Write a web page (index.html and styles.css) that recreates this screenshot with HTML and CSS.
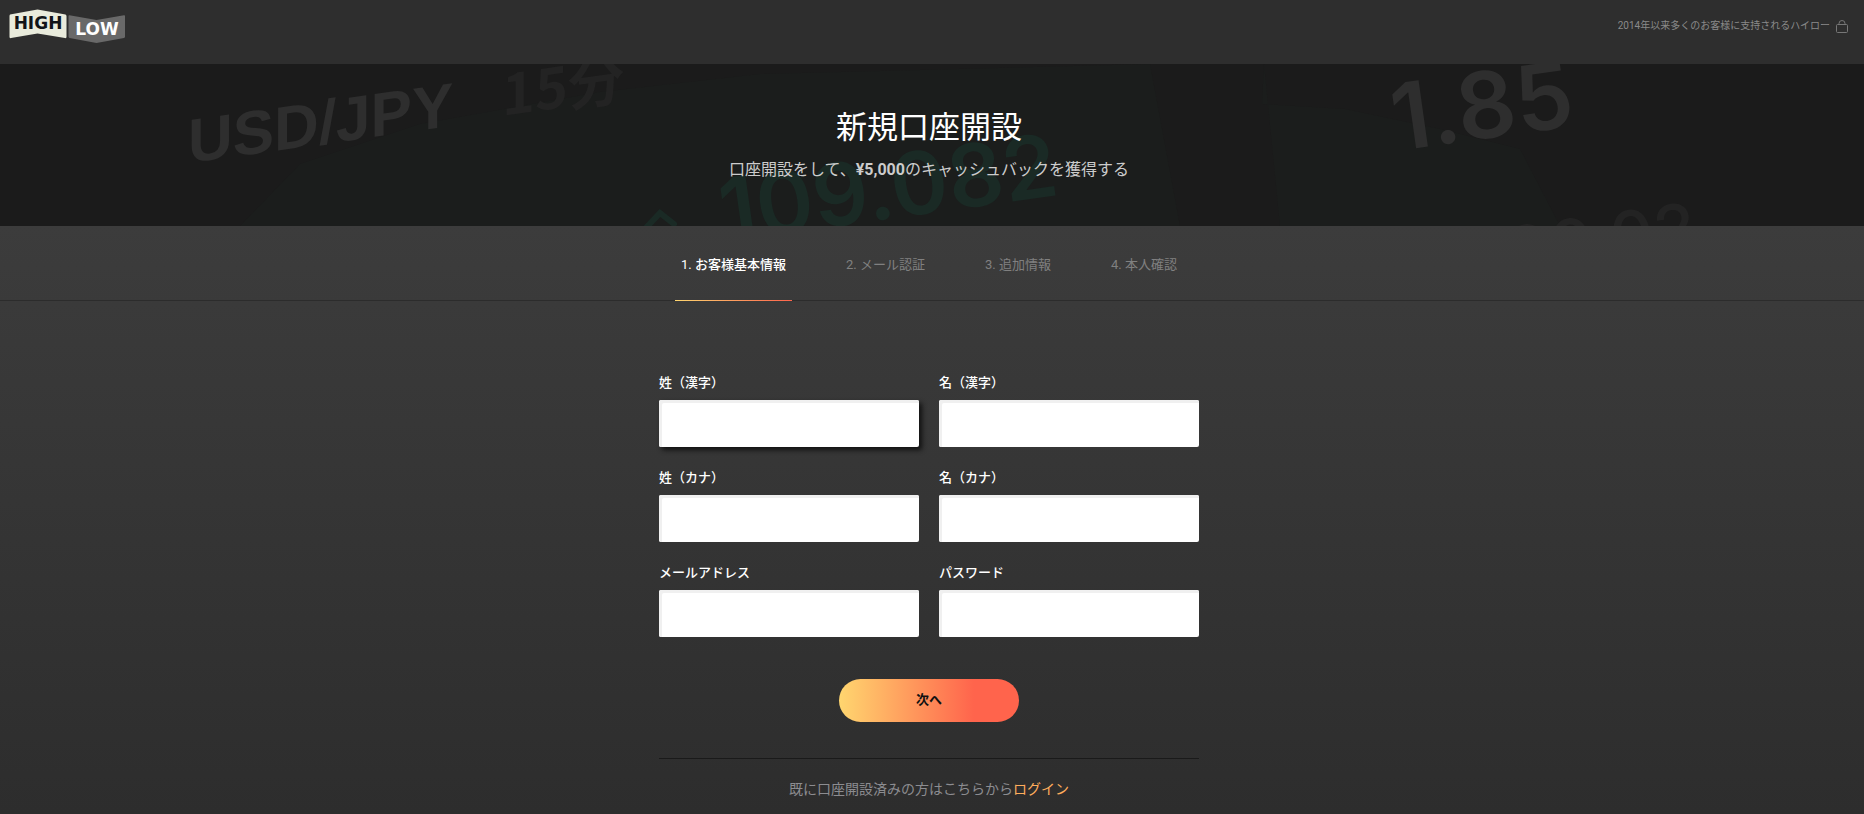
FILE: index.html
```html
<!DOCTYPE html>
<html lang="ja">
<head>
<meta charset="utf-8">
<meta name="viewport" content="width=device-width, initial-scale=1">
<title>新規口座開設</title>
<link rel="stylesheet" href="styles.css">
</head>
<body>
<header class="topbar">
  <a class="logo" href="#" aria-label="HIGH LOW">
    <svg width="116" height="34" viewBox="0 0 116 34" aria-hidden="true">
      <path class="logo-high-plate" d="M1 5.500 28.500.5 56.500 5.500Q57.500 6 57.500 7V28Q57.500 29.500 56 29L28.500 24.500 2 29Q.5 29.500.5 28V7Q.5 6 1 5.500Z"/>
      <path class="logo-low-plate" d="M59.500 7Q59.500 6 60.500 6.200L87.500 11 115 6.200Q116 6 116 7V27.500Q116 28.500 115 29L87.500 34 60.500 29Q59.500 28.500 59.500 27.500Z"/>
      <text class="logo-high" x="29" y="20" text-anchor="middle">HIGH</text>
      <text class="logo-low" x="88" y="26" text-anchor="middle">LOW</text>
    </svg>
  </a>
  <p class="tagline">
    <span>2014年以来多くのお客様に支持されるハイロー</span>
    <svg width="12" height="13" viewBox="0 0 12 13" aria-hidden="true">
      <path class="lock" d="M3 4.500V3.500a3 3 0 0 1 6 0V4.500M1.500 4.500H10.500Q11.500 4.500 11.500 5.500V11.500Q11.500 12.500 10.500 12.500H1.500Q.5 12.500 .5 11.500V5.500Q.5 4.500 1.500 4.500Z"/>
    </svg>
  </p>
</header>

<section class="hero">
  <svg class="hero-art" viewBox="0 0 1864 162" preserveAspectRatio="xMidYMid slice" aria-hidden="true">
    <path class="art-glow" d="M240 162 300 100 420 60 600 28 760 10 1150 0 1180 162Z"/>
    <path class="art-glow" d="M1264 0 1262 40 1345 45 1440 65 1520 85 1560 162H1280Z"/>
    <text class="art-pair" transform="translate(188 99) skewY(-8)">USD/JPY</text>
    <text class="art-term" transform="translate(502 52) skewY(-8)">15分</text>
    <text class="art-rate" transform="translate(724 178) rotate(-8)">109.082</text>
    <text class="art-payout" transform="translate(1396 87) rotate(-8)">1.85</text>
    <text class="art-small" transform="translate(1510 213) rotate(-8)">00.02</text>
    <path class="art-caret" d="M642 168 660 149 674 160"/>
  </svg>
  <div class="hero-text">
    <h1>新規口座開設</h1>
    <p>口座開設をして、<strong>¥5,000</strong>のキャッシュバックを獲得する</p>
  </div>
</section>

<main class="main">
  <nav class="steps" aria-label="お申し込みの流れ">
    <ol>
      <li class="step current" aria-current="step">1. <b>お客様基本情報</b></li>
      <li class="step">2. メール認証</li>
      <li class="step">3. 追加情報</li>
      <li class="step">4. 本人確認</li>
    </ol>
  </nav>

  <form class="form">
    <div class="fields">
      <div class="field"><label for="sei">姓（漢字）</label><input class="raised" id="sei" type="text"></div>
      <div class="field"><label for="mei">名（漢字）</label><input id="mei" type="text"></div>
      <div class="field"><label for="sei-kana">姓（カナ）</label><input id="sei-kana" type="text"></div>
      <div class="field"><label for="mei-kana">名（カナ）</label><input id="mei-kana" type="text"></div>
      <div class="field"><label for="mail">メールアドレス</label><input id="mail" type="email"></div>
      <div class="field"><label for="pass">パスワード</label><input id="pass" type="password"></div>
    </div>
    <button class="next" type="submit">次へ</button>
    <p class="login">既に口座開設済みの方はこちらから<a href="#">ログイン</a></p>
  </form>
</main>
</body>
</html>
```

FILE: styles.css
```css
* { box-sizing: border-box; }

body {
  margin: 0;
  min-height: 100vh;
  display: flex;
  flex-direction: column;
  background: #2d2d2d;
  color: #fff;
  font-family: Roboto, "Noto Sans CJK JP", sans-serif;
  font-size: 13px;
}

h1, p, ol { margin: 0; padding: 0; }

.topbar {
  display: flex;
  justify-content: space-between;
  align-items: flex-start;
  height: 64px;
  padding: 9px 16px 0 9px;
  background: #2e2e2e;
}

.logo { display: block; line-height: 0; }
.logo-high-plate { fill: #e9ebdc; }
.logo-low-plate { fill: #696969; }
.logo-high, .logo-low {
  font-family: "DejaVu Sans", sans-serif;
  font-weight: 700;
  font-size: 17px;
}
.logo-high { fill: #111418; }
.logo-low { fill: #fff; }

.tagline {
  display: flex;
  align-items: center;
  gap: 6px;
  padding-top: 8px;
  color: #8a8a8a;
  font-size: 10px;
  line-height: 18px;
}
.lock { fill: none; stroke: #777; }

.hero {
  position: relative;
  overflow: hidden;
  height: 162px;
  padding: 44px 6px 0 0;
  background: #1b1b1b;
  text-align: center;
}
.hero-art {
  position: absolute;
  inset: 0;
  width: 100%;
  height: 100%;
}
.art-glow { fill: #1b1d1c; }
.art-pair { fill: #2e2e2e; font: 700 62px "Liberation Sans", sans-serif; }
.art-term { fill: #232323; font: 700 56px "Noto Sans CJK JP", sans-serif; }
.art-rate { fill: #1a2a25; font: 600 87px Inter, sans-serif; }
.art-payout { fill: #2e2e2e; font: 600 92px Inter, sans-serif; }
.art-small { fill: #232323; font: 500 68px Inter, sans-serif; }
.art-caret { fill: none; stroke: #1a2a25; stroke-width: 6; stroke-linecap: round; }

.hero-text { position: relative; }
.hero h1 {
  font-size: 31px;
  font-weight: 400;
  line-height: 40px;
}
.hero p {
  margin-top: 10px;
  color: #ccc;
  font-size: 16px;
  line-height: 24px;
}

.main {
  flex: 1;
  background: linear-gradient(#3c3c3c, #2d2d2d);
}

.steps {
  padding-right: 6px;
  border-bottom: 1px solid #2c2c2c;
}
.steps ol {
  display: flex;
  justify-content: center;
  gap: 48px;
  list-style: none;
}
.step {
  position: relative;
  padding: 29px 6px 25px;
  color: #808080;
  line-height: 20px;
}
.current { color: #fff; }
.current b { font-weight: 500; }
.current::after {
  content: "";
  position: absolute;
  left: 0;
  right: 0;
  bottom: -1px;
  height: 1px;
  background: linear-gradient(90deg, #ffd66f, #ff644c);
}

.form {
  display: flex;
  flex-direction: column;
  align-items: center;
  padding: 72px 6px 14px 0;
}
.fields {
  display: grid;
  grid-template-columns: 1fr 1fr;
  gap: 21px 20px;
  width: 540px;
  max-width: 100%;
}
.field label {
  display: block;
  margin-bottom: 7px;
  font-weight: 500;
  line-height: 20px;
}
.field input {
  display: block;
  width: 100%;
  height: 47px;
  padding: 0 12px;
  border: 0;
  border-radius: 2px;
  background: #fff;
  box-shadow: inset 3px 3px 0 #f0f0f0;
  font: inherit;
}
.field .raised {
  box-shadow: inset 3px 3px 0 #f0f0f0, 3px 3px 5px #111;
}

.next {
  width: 180px;
  height: 43px;
  margin-top: 42px;
  padding: 0 0 4px;
  border: 0;
  border-radius: 22px;
  background: linear-gradient(90deg, #ffd66f, #ff644c 75%);
  color: #111;
  font: inherit;
  font-weight: 700;
}

.login {
  width: 540px;
  max-width: 100%;
  margin-top: 36px;
  padding-top: 19px;
  border-top: 1px solid #1a1a1a;
  color: #8c8c90;
  font-size: 14px;
  line-height: 22px;
  text-align: center;
}
.login a { color: #ffad5c; text-decoration: none; }
```
